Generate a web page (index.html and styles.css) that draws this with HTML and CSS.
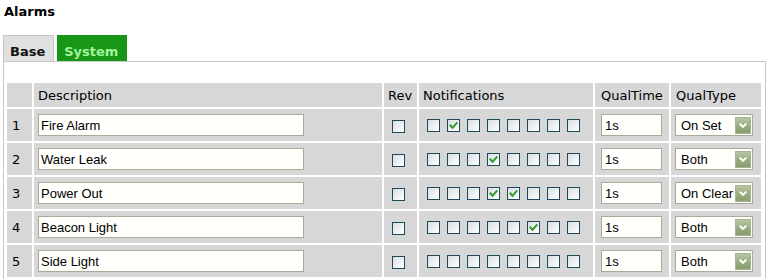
FILE: index.html
```html
<!DOCTYPE html>
<html>
<head>
<meta charset="utf-8">
<link rel="stylesheet" href="styles.css">
</head>
<body>
<h1 class="title">Alarms</h1>
<div class="tabs">
  <span class="tab">Base</span>
  <span class="tab active">System</span>
</div>
<div class="panel">
  <table class="grid">
    <colgroup>
      <col class="w-num"><col class="w-desc"><col class="w-rev"><col class="w-notes"><col class="w-qt"><col class="w-qtype">
    </colgroup>
    <thead>
      <tr>
        <th class="c-num"></th>
        <th class="c-desc">Description</th>
        <th class="c-rev">Rev</th>
        <th class="c-notes">Notifications</th>
        <th class="c-qt">QualTime</th>
        <th class="c-qtype">QualType</th>
      </tr>
    </thead>
    <tbody>
      <tr>
        <td class="c-num">1</td>
        <td class="c-desc"><input class="desc" type="text" value="Fire Alarm"></td>
        <td class="c-rev"><span class="cb"></span></td>
        <td class="c-notes"><div class="notes"><span class="cb"></span><span class="cb on"><svg viewBox="0 0 11 11" width="11" height="11"><path d="M2.5 5.5 L4.6 7.8 L8.6 3.2" /></svg></span><span class="cb"></span><span class="cb"></span><span class="cb"></span><span class="cb"></span><span class="cb"></span><span class="cb"></span></div></td>
        <td class="c-qt"><input class="qt" type="text" value="1s"></td>
        <td class="c-qtype"><div class="sel"><span class="sel-text">On Set</span><span class="arrow"><svg viewBox="0 0 15 15" width="15" height="15"><path d="M4 5.5 L7.5 9 L11 5.5" /></svg></span></div></td>
      </tr>
      <tr>
        <td class="c-num">2</td>
        <td class="c-desc"><input class="desc" type="text" value="Water Leak"></td>
        <td class="c-rev"><span class="cb"></span></td>
        <td class="c-notes"><div class="notes"><span class="cb"></span><span class="cb"></span><span class="cb"></span><span class="cb on"><svg viewBox="0 0 11 11" width="11" height="11"><path d="M2.5 5.5 L4.6 7.8 L8.6 3.2" /></svg></span><span class="cb"></span><span class="cb"></span><span class="cb"></span><span class="cb"></span></div></td>
        <td class="c-qt"><input class="qt" type="text" value="1s"></td>
        <td class="c-qtype"><div class="sel"><span class="sel-text">Both</span><span class="arrow"><svg viewBox="0 0 15 15" width="15" height="15"><path d="M4 5.5 L7.5 9 L11 5.5" /></svg></span></div></td>
      </tr>
      <tr>
        <td class="c-num">3</td>
        <td class="c-desc"><input class="desc" type="text" value="Power Out"></td>
        <td class="c-rev"><span class="cb"></span></td>
        <td class="c-notes"><div class="notes"><span class="cb"></span><span class="cb"></span><span class="cb"></span><span class="cb on"><svg viewBox="0 0 11 11" width="11" height="11"><path d="M2.5 5.5 L4.6 7.8 L8.6 3.2" /></svg></span><span class="cb on"><svg viewBox="0 0 11 11" width="11" height="11"><path d="M2.5 5.5 L4.6 7.8 L8.6 3.2" /></svg></span><span class="cb"></span><span class="cb"></span><span class="cb"></span></div></td>
        <td class="c-qt"><input class="qt" type="text" value="1s"></td>
        <td class="c-qtype"><div class="sel"><span class="sel-text">On Clear</span><span class="arrow"><svg viewBox="0 0 15 15" width="15" height="15"><path d="M4 5.5 L7.5 9 L11 5.5" /></svg></span></div></td>
      </tr>
      <tr>
        <td class="c-num">4</td>
        <td class="c-desc"><input class="desc" type="text" value="Beacon Light"></td>
        <td class="c-rev"><span class="cb"></span></td>
        <td class="c-notes"><div class="notes"><span class="cb"></span><span class="cb"></span><span class="cb"></span><span class="cb"></span><span class="cb"></span><span class="cb on"><svg viewBox="0 0 11 11" width="11" height="11"><path d="M2.5 5.5 L4.6 7.8 L8.6 3.2" /></svg></span><span class="cb"></span><span class="cb"></span></div></td>
        <td class="c-qt"><input class="qt" type="text" value="1s"></td>
        <td class="c-qtype"><div class="sel"><span class="sel-text">Both</span><span class="arrow"><svg viewBox="0 0 15 15" width="15" height="15"><path d="M4 5.5 L7.5 9 L11 5.5" /></svg></span></div></td>
      </tr>
      <tr>
        <td class="c-num">5</td>
        <td class="c-desc"><input class="desc" type="text" value="Side Light"></td>
        <td class="c-rev"><span class="cb"></span></td>
        <td class="c-notes"><div class="notes"><span class="cb"></span><span class="cb"></span><span class="cb"></span><span class="cb"></span><span class="cb"></span><span class="cb"></span><span class="cb"></span><span class="cb"></span></div></td>
        <td class="c-qt"><input class="qt" type="text" value="1s"></td>
        <td class="c-qtype"><div class="sel"><span class="sel-text">Both</span><span class="arrow"><svg viewBox="0 0 15 15" width="15" height="15"><path d="M4 5.5 L7.5 9 L11 5.5" /></svg></span></div></td>
      </tr>
    </tbody>
  </table>
</div>
</body>
</html>
```
FILE: styles.css
```css
html, body {
  margin: 0;
  background: #ffffff;
}
body {
  padding: 4px 3px 0 3px;
  font-family: "DejaVu Sans", Verdana, sans-serif;
  font-size: 13px;
  color: #000;
}
.title {
  margin: 0 0 0 1px;
  font-size: 13px;
  font-weight: bold;
  line-height: 16px;
}
.tabs {
  display: flex;
  gap: 3px;
  margin-top: 15px;
}
.tab {
  box-sizing: border-box;
  height: 26px;
  padding: 8px 8px 0 6px;
  line-height: 15px;
  font-weight: bold;
  background: #e0e0e0;
  border: 1px solid #c6c6c6;
  border-bottom: none;
  color: #111;
}
.tab.active {
  background: #179617;
  border-color: #179617;
  color: #a3f49c;
}
.panel {
  border: 1px solid #c8c8c8;
  padding: 19px 1px 0 1px;
  background: #fff;
}
.grid {
  border-collapse: separate;
  border-spacing: 2px;
  table-layout: fixed;
  width: 758px;
}
.w-num { width: 25px; }
.w-desc { width: 348px; }
.w-rev { width: 33px; }
.w-notes { width: 174px; }
.w-qt { width: 74px; }
.w-qtype { width: 90px; }
.grid th, .grid td {
  background: #d7d7d7;
  padding: 0 4px;
  text-align: left;
  vertical-align: middle;
  font-weight: normal;
  white-space: nowrap;
}
.grid th {
  height: 24px;
  line-height: 15px;
}
.grid td {
  height: 32px;
  line-height: 15px;
}
.grid .c-num { padding-left: 5px; }
.grid td.c-rev { padding-left: 8px; }
.grid td.c-notes { padding-left: 8px; }
.grid .c-qt { padding-left: 6px; }
.grid .c-qtype { padding-left: 4px; }
.grid th.c-qtype { padding-left: 5px; }

.desc, .qt {
  display: block;
  box-sizing: border-box;
  height: 22px;
  margin: 0;
  border: 1px solid #a9ab98;
  background: #fffffb;
  font-family: "Liberation Sans", Arial, sans-serif;
  font-size: 13px;
  color: #000;
  outline: none;
}
.desc {
  width: 266px;
  padding: 1px 2px 0 2px;
}
.qt {
  width: 61px;
  padding: 1px 3px 0 3px;
}
.cb {
  display: inline-flex;
  align-items: center;
  justify-content: center;
  box-sizing: border-box;
  width: 13px;
  height: 13px;
  border: 1px solid #1f4a5c;
  background: linear-gradient(135deg, #d9dee2 0%, #f4f6f7 70%, #ffffff 100%);
  vertical-align: middle;
}
.cb svg {
  display: block;
}
.cb svg path {
  fill: none;
  stroke: #2a9b2a;
  stroke-width: 2;
  stroke-linecap: square;
}
.notes {
  display: flex;
  gap: 7px;
  align-items: center;
}
.sel {
  display: flex;
  align-items: center;
  box-sizing: border-box;
  width: 78px;
  height: 22px;
  border: 1px solid #a9ab98;
  background: #fffffb;
  padding-left: 5px;
  font-family: "Liberation Sans", Arial, sans-serif;
  font-size: 13px;
}
.sel-text {
  flex: 1;
  min-width: 0;
  overflow: hidden;
  padding-top: 1px;
}
.arrow {
  flex: none;
  display: flex;
  align-items: center;
  justify-content: center;
  box-sizing: border-box;
  width: 16px;
  height: 17px;
  margin-right: 1px;
  border: 1px solid #a6b48f;
  background: linear-gradient(180deg, #b7c5a1 0%, #98aa7c 60%, #8a9e6d 100%);
}
.arrow svg {
  display: block;
}
.arrow svg path {
  fill: none;
  stroke: #ffffff;
  stroke-width: 2.2;
}
```
